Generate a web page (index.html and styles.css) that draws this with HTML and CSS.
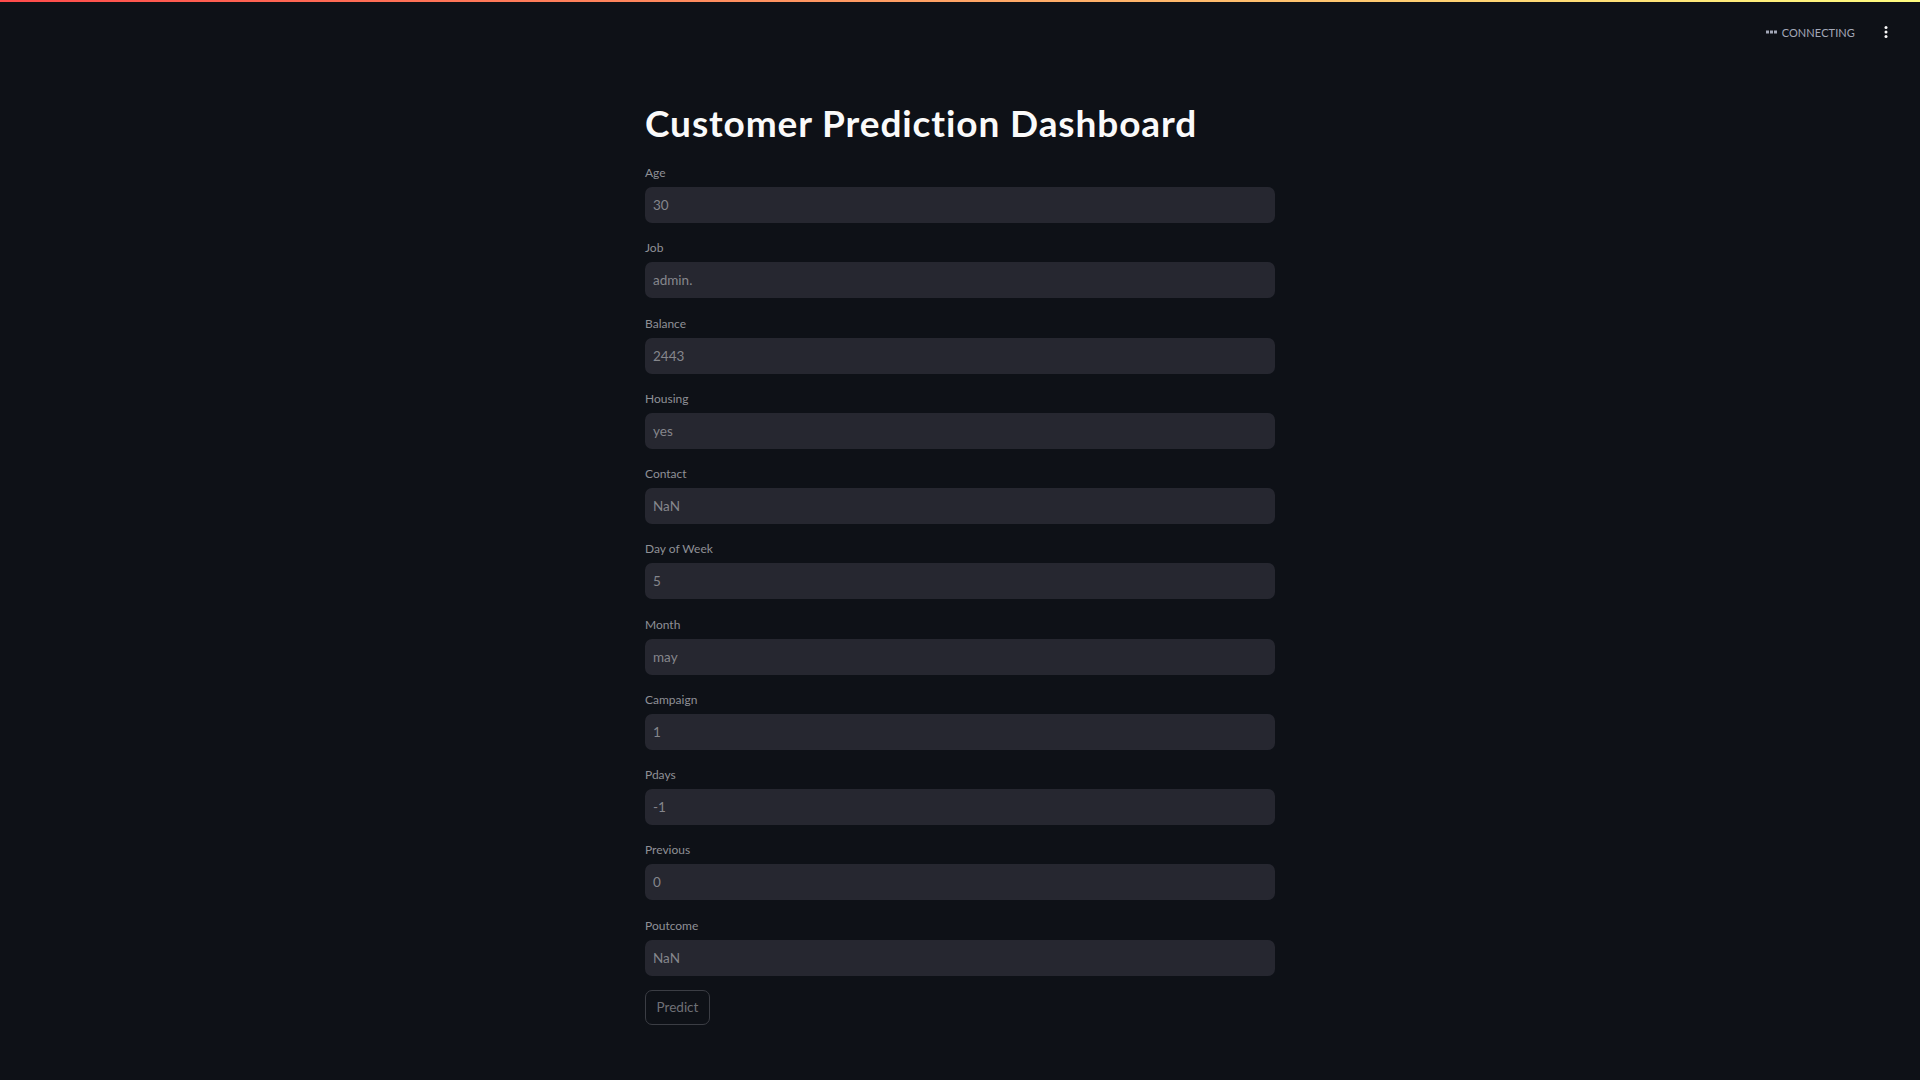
FILE: index.html
```html
<!DOCTYPE html>
<html lang="en">
<head>
<meta charset="utf-8">
<title>Customer Prediction Dashboard</title>
<link rel="stylesheet" href="styles.css">
</head>
<body>
<div class="decoration"></div>
<header class="topbar">
  <div class="status">
    <svg class="status-icon" width="11" height="4" viewBox="0 0 11 4"><rect x="0" y="0.5" width="3" height="3" fill="#a3a8b8"/><rect x="4" y="0.5" width="3" height="3" fill="#a3a8b8"/><rect x="8" y="0.5" width="3" height="3" fill="#a3a8b8"/></svg>
    <span class="status-text">CONNECTING</span>
  </div>
  <button class="menu" aria-label="Main menu">
    <svg width="4" height="12" viewBox="0 0 4 12"><circle cx="2" cy="1.6" r="1.5" fill="#fafafa"/><circle cx="2" cy="6" r="1.5" fill="#fafafa"/><circle cx="2" cy="10.4" r="1.5" fill="#fafafa"/></svg>
  </button>
</header>
<main class="main">
  <h1 class="title">Customer Prediction Dashboard</h1>
  <div class="form">
    <div class="field"><label class="label">Age</label><div class="input">30</div></div>
    <div class="field"><label class="label">Job</label><div class="input">admin.</div></div>
    <div class="field"><label class="label">Balance</label><div class="input">2443</div></div>
    <div class="field"><label class="label">Housing</label><div class="input">yes</div></div>
    <div class="field"><label class="label">Contact</label><div class="input">NaN</div></div>
    <div class="field"><label class="label">Day of Week</label><div class="input">5</div></div>
    <div class="field"><label class="label">Month</label><div class="input">may</div></div>
    <div class="field"><label class="label">Campaign</label><div class="input">1</div></div>
    <div class="field"><label class="label">Pdays</label><div class="input">-1</div></div>
    <div class="field"><label class="label">Previous</label><div class="input">0</div></div>
    <div class="field"><label class="label">Poutcome</label><div class="input">NaN</div></div>
    <div class="actions"><button class="button">Predict</button></div>
  </div>
</main>
</body>
</html>
```
FILE: styles.css
```css
html, body {
  margin: 0;
  padding: 0;
  background: #0e1117;
  height: 100%;
}
body {
  font-family: Lato, "Noto Sans", sans-serif;
  color: #fafafa;
  overflow: hidden;
}
.decoration {
  height: 2px;
  background: linear-gradient(90deg, #ff4b4b, #fffd80);
}
.topbar {
  display: flex;
  justify-content: flex-end;
  align-items: center;
  height: 58px;
  margin-top: -2px;
  padding-right: 32px;
  gap: 29px;
}
.status {
  display: flex;
  align-items: center;
  gap: 5px;
  padding-top: 6px;
}
.status-icon {
  display: block;
}
.status-text {
  font-size: 11px;
  color: #a3a8b8;
  letter-spacing: 0.1px;
}
.menu {
  background: none;
  border: 0;
  padding: 0;
  display: flex;
  padding-top: 6px;
}
.main {
  width: 630px;
  margin: 0 auto;
  padding-top: 45px;
}
.title {
  margin: 0 0 20px 0;
  font-size: 37px;
  line-height: 40px;
  font-weight: 700;
  color: #fafafa;
  letter-spacing: 0.9px;
}
.form {
  display: flex;
  flex-direction: column;
  gap: 15.25px;
}
.field {
  display: flex;
  flex-direction: column;
}
.label {
  font-size: 12px;
  line-height: 20px;
  height: 20px;
  margin-bottom: 4px;
  color: #8e9096;
}
.input {
  height: 36px;
  background: #262730;
  border-radius: 7px;
  padding: 0 8px;
  display: flex;
  align-items: center;
  font-size: 13.5px;
  color: #85868c;
}
.actions {
  display: flex;
  margin-top: -1px;
}
.button {
  height: 35px;
  width: 65px;
  box-sizing: border-box;
  background: transparent;
  border: 1px solid #3b3d44;
  border-radius: 7px;
  font-family: Lato, "Noto Sans", sans-serif;
  font-size: 13.5px;
  color: #6e7076;
  padding: 0;
}
```
